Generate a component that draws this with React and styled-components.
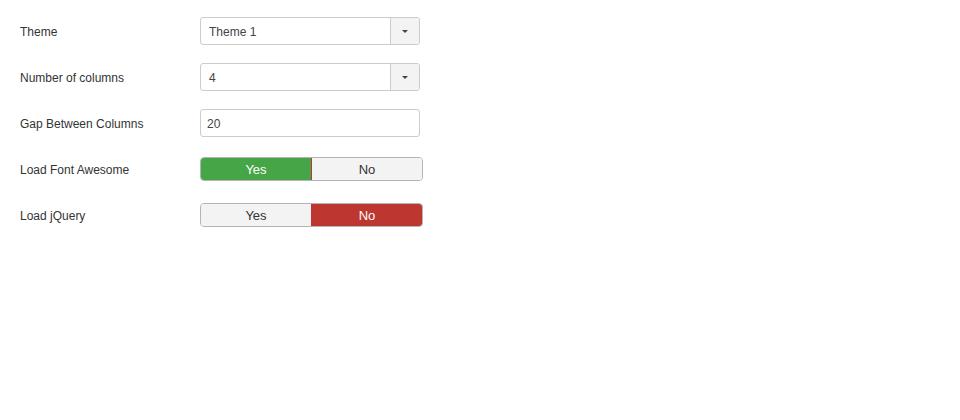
import React from "react";
import styled, { createGlobalStyle } from "styled-components";

const GlobalStyle = createGlobalStyle`
  body {
    margin: 0;
    background: #ffffff;
    font-family: "Liberation Sans", Arial, sans-serif;
    font-size: 12px;
    color: #333333;
  }
`;

const Form = styled.div`
  display: flex;
  flex-direction: column;
  gap: 18px;
  padding: 17px 0 0 20px;
`;

const Row = styled.div`
  display: flex;
  align-items: center;
  min-height: 28px;
`;

const Label = styled.label`
  width: 180px;
  padding-top: 2px;
  font-size: 12px;
  color: #333333;
`;

const SelectBox = styled.div`
  display: flex;
  width: 220px;
  height: 28px;
  box-sizing: border-box;
  border: 1px solid #cccccc;
  border-radius: 3px;
  background: #ffffff;
  overflow: hidden;
`;

const SelectValue = styled.div`
  flex: 1;
  display: flex;
  align-items: center;
  padding: 1px 0 0 8px;
  font-size: 12px;
  color: #444444;
`;

const SelectButton = styled.div`
  width: 28px;
  display: flex;
  align-items: center;
  justify-content: center;
  background: #f3f3f3;
  border-left: 1px solid #cccccc;
`;

const Caret = styled.span`
  width: 0;
  height: 0;
  border-left: 3px solid transparent;
  border-right: 3px solid transparent;
  border-top: 3px solid #444444;
`;

const TextInput = styled.input`
  width: 220px;
  height: 28px;
  box-sizing: border-box;
  border: 1px solid #cccccc;
  border-radius: 3px;
  padding: 1px 6px 0;
  font-family: "Liberation Sans", Arial, sans-serif;
  font-size: 12px;
  color: #444444;
  outline: none;
`;

const Toggle = styled.div`
  display: flex;
  width: 223px;
  height: 24px;
  box-sizing: border-box;
  border: 1px solid #b3b3b3;
  border-radius: 4px;
  overflow: hidden;
`;

const activeColors = { yes: "#46a546", no: "#bd362f" };

const ToggleOption = styled.button`
  flex: 1;
  border: none;
  margin: 0;
  padding: 0;
  font-family: "Liberation Sans", Arial, sans-serif;
  font-size: 13px;
  cursor: pointer;
  background: ${(p) => (p.$active ? activeColors[p.$kind] : "#f3f3f3")};
  color: ${(p) => (p.$active ? "#ffffff" : "#333333")};
  & + & {
    border-left: 1px solid ${(p) => (p.$active ? activeColors[p.$kind] : "#b3b3b3")};
  }
`;

function Select({ value }) {
  return (
    <SelectBox>
      <SelectValue>{value}</SelectValue>
      <SelectButton>
        <Caret />
      </SelectButton>
    </SelectBox>
  );
}

function YesNo({ value }) {
  return (
    <Toggle>
      <ToggleOption $kind="yes" $active={value === "yes"}>Yes</ToggleOption>
      <ToggleOption $kind="no" $active={value === "no"}>No</ToggleOption>
    </Toggle>
  );
}

export default function App() {
  return (
    <>
      <GlobalStyle />
      <Form>
        <Row>
          <Label>Theme</Label>
          <Select value="Theme 1" />
        </Row>
        <Row>
          <Label>Number of columns</Label>
          <Select value="4" />
        </Row>
        <Row>
          <Label>Gap Between Columns</Label>
          <TextInput defaultValue="20" />
        </Row>
        <Row>
          <Label>Load Font Awesome</Label>
          <YesNo value="yes" />
        </Row>
        <Row>
          <Label>Load jQuery</Label>
          <YesNo value="no" />
        </Row>
      </Form>
    </>
  );
}
